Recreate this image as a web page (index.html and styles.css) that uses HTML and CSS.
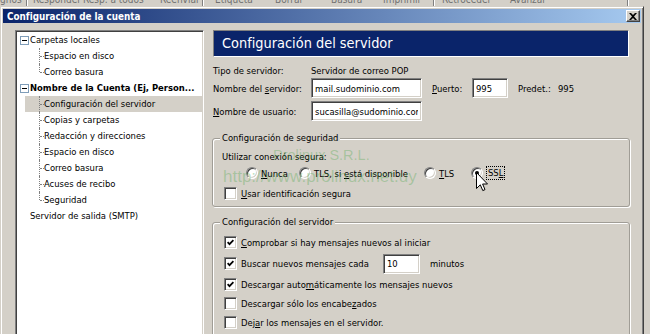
FILE: index.html
```html
<!DOCTYPE html>
<html lang="es">
<head>
    <meta charset="UTF-8">
    <title>Configuración de la cuenta</title>
    <link rel="stylesheet" href="styles.css">
</head>
<body>
    <div class="toolbar">
        <span>gnos</span><span class="sep"></span><span>Responder</span><span>Resp. a todos</span><span>Reenviar</span><span class="sep"></span><span>Etiqueta</span><span>Borrar</span><span>Basura</span><span>Imprimir</span><span class="sep"></span><span>Retroceder</span><span>Avanzar</span><span class="sep"></span>
    </div>

    <div class="window">
        <div class="titlebar">
            <span>Configuración de la cuenta</span>
            <button class="close">
                <svg width="8" height="7" viewBox="0 0 8 7"><path d="M0 0h2l2 2 2-2h2L5 3.5 8 7H6L4 5 2 7H0l3-3.5z" fill="#000"/></svg>
            </button>
        </div>

        <div class="content">
            <div class="tree">
                <div class="tree-row parent"><span class="twisty"></span>Carpetas locales</div>
                <div class="tree-row leaf">Espacio en disco</div>
                <div class="tree-row leaf last">Correo basura</div>
                <div class="tree-row parent bold"><span class="twisty"></span>Nombre de la Cuenta (Ej, Person...</div>
                <div class="tree-row leaf selected">Configuración del servidor</div>
                <div class="tree-row leaf">Copias y carpetas</div>
                <div class="tree-row leaf">Redacción y direcciones</div>
                <div class="tree-row leaf">Espacio en disco</div>
                <div class="tree-row leaf">Correo basura</div>
                <div class="tree-row leaf">Acuses de recibo</div>
                <div class="tree-row leaf last">Seguridad</div>
                <div class="tree-row top-level">Servidor de salida (SMTP)</div>
            </div>

            <div class="panel">
                <div class="header">Configuración del servidor</div>

                <div class="field-row type-row">
                    <span class="field-label">Tipo de servidor:</span>
                    <span>Servidor de correo POP</span>
                </div>
                <div class="field-row server-row">
                    <span class="field-label">Nombre del <u>s</u>ervidor:</span>
                    <input class="text-input host-input" type="text" value="mail.sudominio.com" readonly>
                    <span class="port-label"><u>P</u>uerto:</span>
                    <input class="text-input port-input" type="text" value="995" readonly>
                    <span class="default-label">Predet.:</span>
                    <span>995</span>
                </div>
                <div class="field-row user-row">
                    <span class="field-label"><u>N</u>ombre de usuario:</span>
                    <input class="text-input host-input" type="text" value="sucasilla@sudominio.com" readonly>
                </div>

                <fieldset class="group security">
                    <legend>Configuración de seguridad</legend>
                    <div class="sub-label">Utilizar conexión segura:</div>
                    <div class="radio-row">
                        <span class="radio-option never"><span class="radio"></span><span><u>N</u>unca</span></span>
                        <span class="radio-option maybe"><span class="radio"></span><span>TLS, si <u>e</u>stá disponible</span></span>
                        <span class="radio-option tls"><span class="radio"></span><span><u>T</u>LS</span></span>
                        <span class="radio-option"><span class="radio checked"></span><span class="focused">SS<u>L</u></span></span>
                    </div>
                    <div class="check-row">
                        <span class="checkbox"></span><span><u>U</u>sar identificación segura</span>
                    </div>
                </fieldset>

                <fieldset class="group server">
                    <legend>Configuración del servidor</legend>
                    <div class="check-row first">
                        <span class="checkbox checked"><svg width="7" height="7" viewBox="0 0 7 7"><path d="M0.6 3.2 2.5 5.2 6.4 1.1" fill="none" stroke="#000" stroke-width="1.7"/></svg></span>
                        <span><u>C</u>omprobar si hay mensajes nuevos al iniciar</span>
                    </div>
                    <div class="check-row interval-row">
                        <span class="checkbox checked"><svg width="7" height="7" viewBox="0 0 7 7"><path d="M0.6 3.2 2.5 5.2 6.4 1.1" fill="none" stroke="#000" stroke-width="1.7"/></svg></span>
                        <span class="interval-text">Buscar nuevos mensa<u>j</u>es cada</span>
                        <input class="text-input interval-input" type="text" value="10" readonly>
                        <span class="minutes">minutos</span>
                    </div>
                    <div class="check-row">
                        <span class="checkbox checked"><svg width="7" height="7" viewBox="0 0 7 7"><path d="M0.6 3.2 2.5 5.2 6.4 1.1" fill="none" stroke="#000" stroke-width="1.7"/></svg></span>
                        <span>Descargar auto<u>m</u>áticamente los mensajes nuevos</span>
                    </div>
                    <div class="check-row">
                        <span class="checkbox"></span><span>Descargar sólo los encabe<u>z</u>ados</span>
                    </div>
                    <div class="check-row">
                        <span class="checkbox"></span><span>Dej<u>a</u>r los mensajes en el servidor.</span>
                    </div>
                </fieldset>
            </div>
        </div>
    </div>

    <div class="watermark">
        <div class="company">Prolinux S.R.L.</div>
        <div>http://www.prolinux.net.uy</div>
    </div>

    <svg class="cursor" width="12" height="20" viewBox="0 0 12 20">
        <path d="M0.5 0.5V16.5L4.3 12.8 6.8 18.6 9 17.6 6.6 12H11.5Z" fill="#fff" stroke="#000" stroke-width="1"/>
    </svg>
</body>
</html>
```

FILE: styles.css
```css
* {
    box-sizing: border-box;
}

body {
    margin: 0;
    width: 650px;
    height: 334px;
    overflow: hidden;
    position: relative;
    background: #d4d0c8;
    font-family: "DejaVu Sans Condensed", "DejaVu Sans", sans-serif;
    font-stretch: condensed;
    font-size: 9.4px;
    color: #000;
}

u {
    text-underline-offset: 1px;
}

/* thunderbird toolbar behind the dialog */
.toolbar {
    display: grid;
    grid-template-columns: 26px 7px 50px 77px 42px 13px 60px 56px 52px 50px 9px 68px 117px 1fr;
    height: 6px;
    overflow: hidden;
    color: #707070;
    font-size: 10px;
}

.toolbar span {
    line-height: 12px;
    margin-top: -6px;
    white-space: nowrap;
}

.toolbar .sep {
    margin-top: 0;
    height: 6px;
    border-left: 1px solid #808080;
    box-shadow: inset 1px 0 #fff;
}

/* dialog window */
.window {
    width: 644px;
    height: 340px;
    padding: 2px;
    border: 1px solid;
    border-color: #d4d0c8 #404040 #404040 #d4d0c8;
    box-shadow: inset 1px 1px #fff, inset -1px -1px #808080;
}

.titlebar {
    display: flex;
    align-items: center;
    justify-content: space-between;
    height: 14px;
    padding: 0 1px 0 4px;
    background: linear-gradient(to right, #0a246a, #a6caf0);
    color: #fff;
    font-weight: bold;
    font-size: 9.8px;
}

.close {
    display: flex;
    align-items: center;
    justify-content: center;
    width: 14px;
    height: 12px;
    padding: 0;
    background: #d4d0c8;
    border: 1px solid;
    border-color: #fff #404040 #404040 #fff;
    box-shadow: inset -1px -1px #808080;
}

.content {
    display: flex;
    gap: 9px;
    padding: 7px 0 0 12px;
}

/* account tree */
.tree {
    flex: none;
    width: 189px;
    height: 320px;
    padding: 1px 0 0 1px;
    background: #fff;
    border: 1px solid;
    border-color: #808080 #fff #fff #808080;
    box-shadow: inset 1px 1px #404040, inset -1px -1px #d4d0c8;
}

.tree-row {
    position: relative;
    height: 16px;
    line-height: 16px;
    white-space: nowrap;
}

.parent {
    display: flex;
    align-items: center;
    padding-left: 3px;
}

.bold {
    font-weight: bold;
}

.twisty {
    position: relative;
    width: 9px;
    height: 9px;
    margin-right: 1px;
    border: 1px solid #7f9db9;
    background: #fff;
}

.twisty::after {
    content: "";
    position: absolute;
    left: 1px;
    top: 3px;
    width: 5px;
    height: 1px;
    background: #000;
}

.top-level {
    padding-left: 13px;
}

.leaf {
    padding-left: 27px;
}

.leaf::before {
    content: "";
    position: absolute;
    left: 22px;
    top: 0;
    bottom: 0;
    border-left: 1px dotted #808080;
}

.leaf.last::before {
    bottom: 8px;
}

.leaf::after {
    content: "";
    position: absolute;
    left: 23px;
    top: 8px;
    width: 4px;
    border-top: 1px dotted #808080;
}

.selected {
    background: linear-gradient(to right, transparent 8px, #d4d0c8 8px);
}

/* right side */
.panel {
    flex: none;
    width: 416px;
    display: flex;
    flex-direction: column;
}

.header {
    height: 27px;
    line-height: 25px;
    padding-left: 8px;
    background: #0a246a;
    color: #fff;
    font-size: 14.4px;
    border: 1px solid;
    border-color: #808080 #fff #fff #808080;
}

.field-row {
    display: flex;
    align-items: center;
    white-space: nowrap;
}

.field-label {
    flex: none;
    width: 98px;
}

.type-row {
    height: 16px;
    margin-top: 5px;
}

.server-row {
    height: 20px;
}

.user-row {
    height: 20px;
    margin-top: 3px;
}

.text-input {
    height: 20px;
    padding: 0 3px;
    font: inherit;
    color: #000;
    background: #fff;
    border: 1px solid;
    border-color: #808080 #fff #fff #808080;
    box-shadow: inset 1px 1px #404040, inset -1px -1px #d4d0c8;
    outline: none;
}

.host-input {
    width: 111px;
}

.port-label {
    width: 40px;
    margin-left: 10px;
}

.port-input {
    width: 36px;
}

.default-label {
    width: 40px;
    margin-left: 10px;
}

.group {
    min-width: 0;
    margin: 11px -1px 0;
    padding: 0 9px 5px;
    border: 1px solid #a09d96;
    border-radius: 3px;
    box-shadow: inset 1px 1px #fff, 1px 1px #fff;
}

.group legend {
    margin-left: -2px;
    padding: 0 2px;
    line-height: 12px;
    background: #d4d0c8;
}

.sub-label {
    margin-top: 6px;
    line-height: 14px;
}

.radio-row {
    display: flex;
    align-items: center;
    height: 16px;
    margin-top: 1px;
    padding-left: 24px;
    white-space: nowrap;
}

.radio-option {
    display: flex;
    align-items: center;
    gap: 3px;
}

.never {
    width: 53px;
}

.maybe {
    width: 125px;
}

.tls {
    width: 47px;
}

.radio {
    position: relative;
    width: 12px;
    height: 12px;
    border-radius: 50%;
    background: #fff;
    border: 1px solid;
    border-color: #808080 #fff #fff #808080;
    box-shadow: inset 1px 1px #404040, inset -1px -1px #d4d0c8;
}

.radio.checked::after {
    content: "";
    position: absolute;
    left: 3px;
    top: 3px;
    width: 4px;
    height: 4px;
    border-radius: 50%;
    background: #000;
}

.focused {
    padding: 0 1px;
    border: 1px dotted #000;
    line-height: 12px;
}

.check-row {
    display: flex;
    align-items: center;
    gap: 4px;
    height: 16px;
    padding-left: 2px;
    white-space: nowrap;
}

.security .check-row {
    margin-top: 4px;
}

.checkbox {
    flex: none;
    display: flex;
    align-items: center;
    justify-content: center;
    width: 13px;
    height: 13px;
    background: #fff;
    border: 1px solid;
    border-color: #808080 #fff #fff #808080;
    box-shadow: inset 1px 1px #404040, inset -1px -1px #d4d0c8;
}

.server {
    margin-top: 9px;
}

.server .check-row {
    height: 19px;
}

.server .first {
    margin-top: 5px;
}

.server .interval-row {
    height: 23px;
}

.interval-text {
    width: 138px;
}

.interval-input {
    width: 37px;
}

.minutes {
    margin-left: 6px;
}

/* overlays */
.watermark {
    position: absolute;
    left: 223px;
    top: 144px;
    font-family: "Liberation Sans", sans-serif;
    font-size: 17px;
    line-height: 22px;
    color: rgba(70, 165, 70, 0.33);
    pointer-events: none;
}

.watermark .company {
    padding-left: 50px;
    font-size: 14.5px;
}

.cursor {
    position: absolute;
    left: 476px;
    top: 172px;
}
```
